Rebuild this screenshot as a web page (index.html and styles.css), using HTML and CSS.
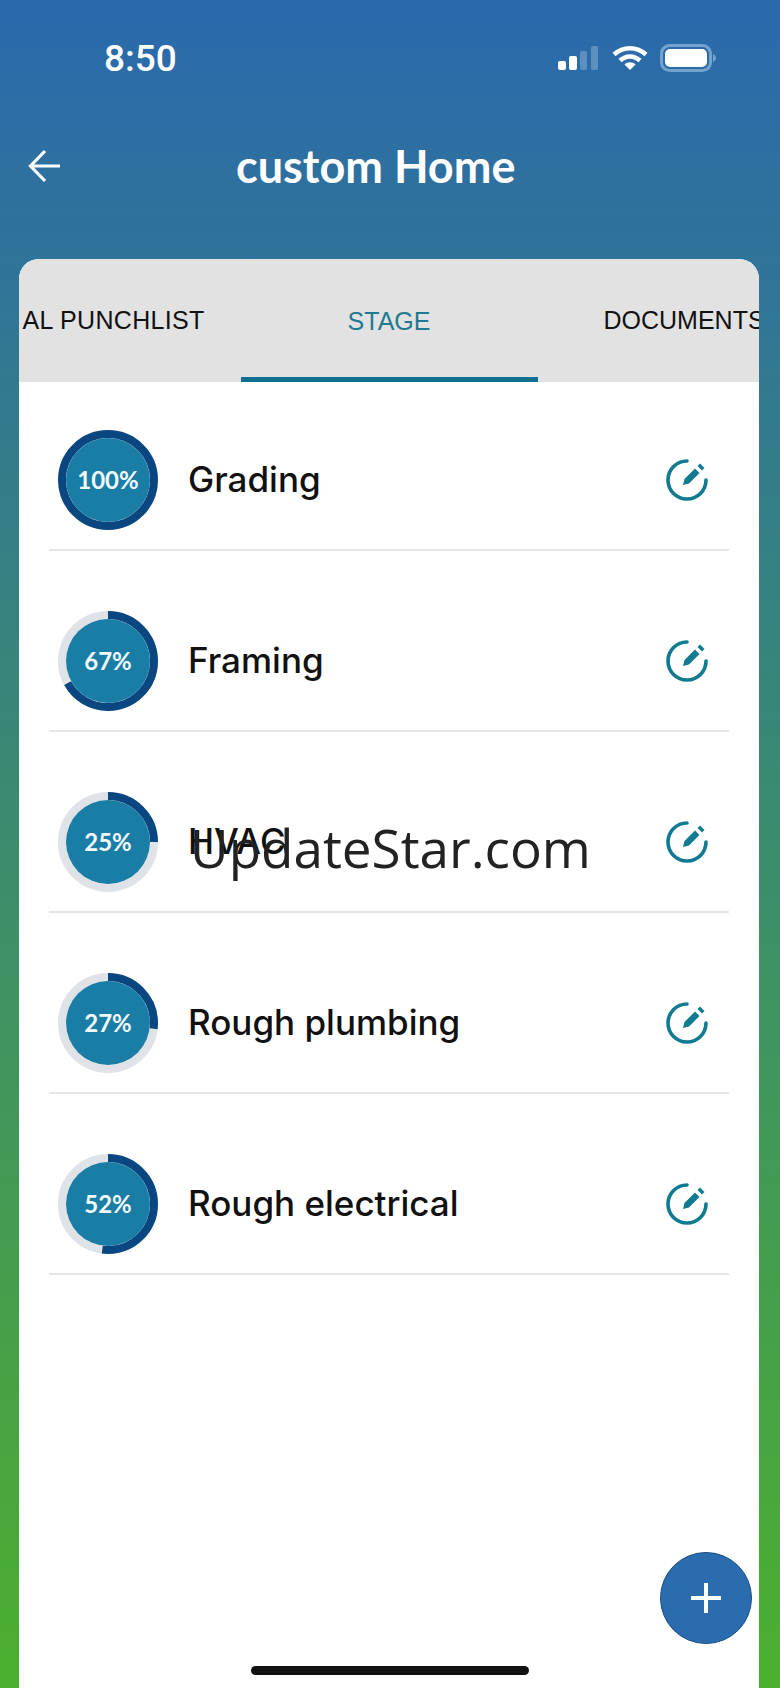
FILE: index.html
```html
<!DOCTYPE html>
<html>
<head>
<title>custom Home</title>
<link rel="stylesheet" href="styles.css">
</head>
<body>

<div class="screen">

  <div class="status">
    <span class="time">8:50</span>
    <div class="status-icons">
      <svg class="signal" width="40" height="26" viewBox="0 0 40 26">
        <rect x="0" y="16" width="8" height="9" rx="2" fill="#fff"/>
        <rect x="11" y="11" width="8" height="14" rx="2" fill="#fff"/>
        <rect x="22" y="6" width="7" height="19" rx="2" fill="#5d8fbf"/>
        <rect x="33" y="1" width="7" height="24" rx="2" fill="#5d8fbf"/>
      </svg>
      <svg width="36" height="26" viewBox="0 0 36 26">
        <path d="M2 9.500C11 1 25 1 34 9.500" fill="none" stroke="#fff" stroke-width="4.500"/>
        <path d="M8 15.500C14 10 22 10 28 15.500" fill="none" stroke="#fff" stroke-width="4.500"/>
        <path d="M12.500 19.500C15.500 16.500 20.500 16.500 23.500 19.500L18 25Z" fill="#fff"/>
      </svg>
      <svg width="56" height="28" viewBox="0 0 56 28">
        <rect x="1.500" y="1.500" width="49" height="25" rx="8" fill="none" stroke="#74a3cf" stroke-width="3"/>
        <rect x="5" y="5" width="42" height="18" rx="5" fill="#fff"/>
        <path d="M53 10C55 11 56 12.500 56 14C56 15.500 55 17 53 18Z" fill="#74a3cf"/>
      </svg>
    </div>
  </div>

  <div class="header">
    <svg class="back" width="34" height="34" viewBox="0 0 34 34">
      <path d="M32 17H3M17 2L2.500 17L17 32" fill="none" stroke="#fff" stroke-width="3.200"/>
    </svg>
    <h1>custom Home</h1>
  </div>

  <div class="card">
    <div class="tabs">
      <div class="tab tab-left">AL PUNCHLIST</div>
      <div class="tab active">STAGE</div>
      <div class="tab tab-right">DOCUMENTS</div>
    </div>

    <ul class="stages">
      <li>
        <div class="ring">
          <svg width="100" height="100" viewBox="0 0 100 100">
            <circle class="track" cx="50" cy="50" r="46"/>
            <circle class="progress" cx="50" cy="50" r="46" pathLength="100" stroke-dasharray="100 100"/>
            <circle class="core" cx="50" cy="50" r="42"/>
          </svg>
          <span>100%</span>
        </div>
        <div class="name">Grading</div>
        <svg class="edit" width="44" height="44" viewBox="0 0 44 44">
          <path d="M22 3A19 19 0 1 0 41 22" fill="none" stroke="#0f7a90" stroke-width="3.600" stroke-linecap="round"/>
          <path d="M18 27L19.500 21L30 10.500L34.500 15L24 25.500Z" fill="#0f7a90"/>
          <path d="M32.500 8L35 5.500L39.500 10L37 12.500Z" fill="#0f7a90"/>
        </svg>
      </li>
      <li>
        <div class="ring">
          <svg width="100" height="100" viewBox="0 0 100 100">
            <circle class="track" cx="50" cy="50" r="46"/>
            <circle class="progress" cx="50" cy="50" r="46" pathLength="100" stroke-dasharray="67 100"/>
            <circle class="core" cx="50" cy="50" r="42"/>
          </svg>
          <span>67%</span>
        </div>
        <div class="name">Framing</div>
        <svg class="edit" width="44" height="44" viewBox="0 0 44 44">
          <path d="M22 3A19 19 0 1 0 41 22" fill="none" stroke="#0f7a90" stroke-width="3.600" stroke-linecap="round"/>
          <path d="M18 27L19.500 21L30 10.500L34.500 15L24 25.500Z" fill="#0f7a90"/>
          <path d="M32.500 8L35 5.500L39.500 10L37 12.500Z" fill="#0f7a90"/>
        </svg>
      </li>
      <li>
        <div class="ring">
          <svg width="100" height="100" viewBox="0 0 100 100">
            <circle class="track" cx="50" cy="50" r="46"/>
            <circle class="progress" cx="50" cy="50" r="46" pathLength="100" stroke-dasharray="25 100"/>
            <circle class="core" cx="50" cy="50" r="42"/>
          </svg>
          <span>25%</span>
        </div>
        <div class="name">HVAC</div>
        <svg class="edit" width="44" height="44" viewBox="0 0 44 44">
          <path d="M22 3A19 19 0 1 0 41 22" fill="none" stroke="#0f7a90" stroke-width="3.600" stroke-linecap="round"/>
          <path d="M18 27L19.500 21L30 10.500L34.500 15L24 25.500Z" fill="#0f7a90"/>
          <path d="M32.500 8L35 5.500L39.500 10L37 12.500Z" fill="#0f7a90"/>
        </svg>
      </li>
      <li>
        <div class="ring">
          <svg width="100" height="100" viewBox="0 0 100 100">
            <circle class="track" cx="50" cy="50" r="46"/>
            <circle class="progress" cx="50" cy="50" r="46" pathLength="100" stroke-dasharray="27 100"/>
            <circle class="core" cx="50" cy="50" r="42"/>
          </svg>
          <span>27%</span>
        </div>
        <div class="name">Rough plumbing</div>
        <svg class="edit" width="44" height="44" viewBox="0 0 44 44">
          <path d="M22 3A19 19 0 1 0 41 22" fill="none" stroke="#0f7a90" stroke-width="3.600" stroke-linecap="round"/>
          <path d="M18 27L19.500 21L30 10.500L34.500 15L24 25.500Z" fill="#0f7a90"/>
          <path d="M32.500 8L35 5.500L39.500 10L37 12.500Z" fill="#0f7a90"/>
        </svg>
      </li>
      <li>
        <div class="ring">
          <svg width="100" height="100" viewBox="0 0 100 100">
            <circle class="track" cx="50" cy="50" r="46"/>
            <circle class="progress" cx="50" cy="50" r="46" pathLength="100" stroke-dasharray="52 100"/>
            <circle class="core" cx="50" cy="50" r="42"/>
          </svg>
          <span>52%</span>
        </div>
        <div class="name">Rough electrical</div>
        <svg class="edit" width="44" height="44" viewBox="0 0 44 44">
          <path d="M22 3A19 19 0 1 0 41 22" fill="none" stroke="#0f7a90" stroke-width="3.600" stroke-linecap="round"/>
          <path d="M18 27L19.500 21L30 10.500L34.500 15L24 25.500Z" fill="#0f7a90"/>
          <path d="M32.500 8L35 5.500L39.500 10L37 12.500Z" fill="#0f7a90"/>
        </svg>
      </li>
    </ul>
  </div>

  <div class="watermark">UpdateStar.com</div>

  <div class="fab">
    <svg width="32" height="32" viewBox="0 0 32 32">
      <path d="M16 1V31M1 16H31" stroke="#fff" stroke-width="4"/>
    </svg>
  </div>

  <div class="home-bar"></div>

</div>

</body>
</html>
```

FILE: styles.css
```css
body {
  margin: 0;
  font-family: "Inter", "Liberation Sans", sans-serif;
}

.screen {
  position: relative;
  width: 780px;
  height: 1688px;
  overflow: hidden;
  display: flex;
  flex-direction: column;
  background: linear-gradient(#2a69ad, #4cb02e);
}

.status {
  height: 116px;
  display: flex;
  justify-content: space-between;
  align-items: center;
  padding: 0 64px 0 104px;
  box-sizing: border-box;
}

.time {
  font-family: "Roboto", sans-serif;
  font-size: 37px;
  font-weight: 500;
  color: #fff;
}

.status-icons {
  display: flex;
  align-items: center;
  gap: 12px;
}

.signal {
  margin-right: 2px;
}

.header {
  height: 143px;
  display: flex;
  align-items: flex-start;
  padding: 33px 0 0 28px;
  box-sizing: border-box;
}

.back {
  flex: none;
}

.header h1 {
  margin: -10px 0 0 174px;
  font-family: "Lato", sans-serif;
  font-size: 45px;
  font-weight: 700;
  color: #fff;
}

.card {
  flex: 1;
  margin: 0 21px 0 19px;
  background: #fff;
  border-radius: 20px 20px 0 0;
  overflow: hidden;
}

.tabs {
  height: 123px;
  display: grid;
  grid-template-columns: 1fr 297px 1fr;
  background: #e2e2e2;
  overflow: hidden;
}

.tab {
  display: flex;
  align-items: center;
  justify-content: center;
  box-sizing: border-box;
  font-family: "Liberation Sans", sans-serif;
  font-size: 25px;
  color: #111;
  white-space: nowrap;
  min-width: 0;
}

.tab-left {
  justify-content: flex-end;
  padding-right: 36px;
  letter-spacing: 0.3px;
}

.tab-right {
  justify-content: flex-start;
  padding-left: 66px;
}

.tab.active {
  color: #1f7a92;
  border-bottom: 5px solid #11708f;
  padding-top: 7px;
}

.stages {
  list-style: none;
  margin: 0;
  padding: 48px 30px 0;
}

.stages li {
  height: 119px;
  margin-bottom: 60px;
  border-bottom: 2px solid #e3e5e6;
  display: flex;
  align-items: flex-start;
  padding-left: 9px;
}

.ring {
  display: grid;
  width: 100px;
  height: 100px;
  flex: none;
}

.ring svg,
.ring span {
  grid-area: 1 / 1;
}

.ring span {
  place-self: center;
  margin-top: -2px;
  font-family: "Lato", sans-serif;
  font-size: 24px;
  font-weight: 700;
  color: #f2fbff;
}

.track {
  fill: none;
  stroke: #dfe2e7;
  stroke-width: 8;
}

.progress {
  fill: none;
  stroke: #0a4780;
  stroke-width: 8;
  transform: rotate(-90deg);
  transform-origin: 50px 50px;
}

.core {
  fill: #1a7da6;
}

.name {
  margin-left: 30px;
  height: 100px;
  line-height: 98px;
  font-size: 35px;
  font-weight: 500;
  color: #111;
}

.edit {
  margin-left: auto;
  margin-top: 28px;
  margin-right: 20px;
}

.watermark {
  position: absolute;
  left: 190px;
  top: 811px;
  font-family: "Open Sans", sans-serif;
  font-size: 53px;
  color: #222;
}

.fab {
  position: absolute;
  left: 660px;
  top: 1552px;
  width: 92px;
  height: 92px;
  border-radius: 50%;
  background: #2a6cae;
  border: 1px solid #1c4f80;
  box-sizing: border-box;
  display: flex;
  align-items: center;
  justify-content: center;
}

.home-bar {
  position: absolute;
  left: 251px;
  top: 1666px;
  width: 278px;
  height: 9px;
  border-radius: 5px;
  background: #111;
}
```
